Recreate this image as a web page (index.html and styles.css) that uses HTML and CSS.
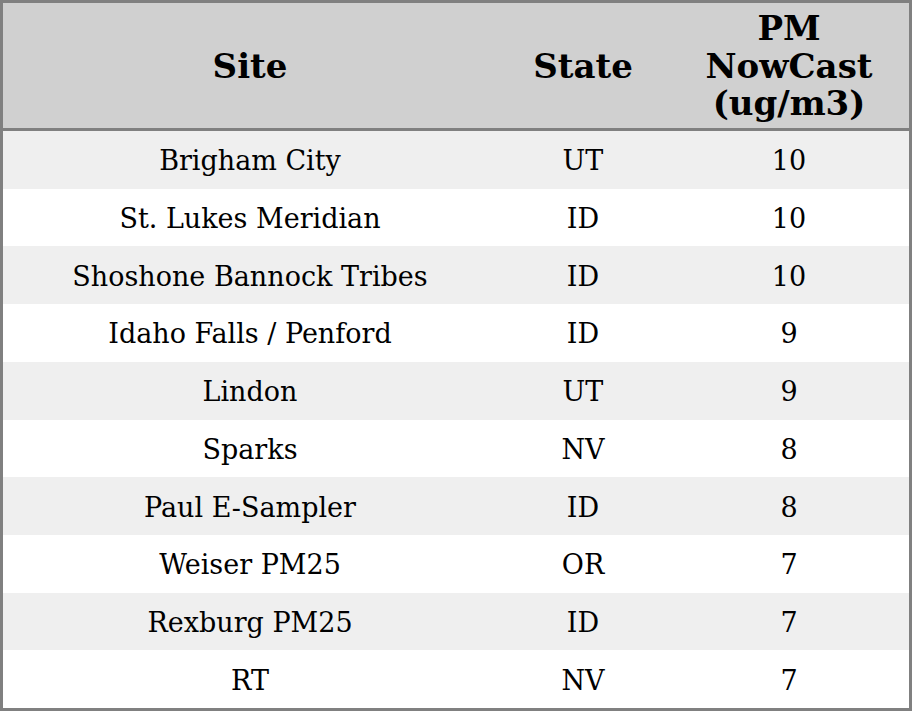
FILE: index.html
```html
<!DOCTYPE html>
<html>
<head>
<meta charset="utf-8">
<link rel="stylesheet" href="styles.css">
</head>
<body>
<div class="table">
  <div class="cell head">Site</div>
  <div class="cell head">State</div>
  <div class="cell head">PM<br>NowCast<br>(ug/m3)</div>

  <div class="cell odd">Brigham City</div><div class="cell odd">UT</div><div class="cell odd">10</div>
  <div class="cell">St. Lukes Meridian</div><div class="cell">ID</div><div class="cell">10</div>
  <div class="cell odd">Shoshone Bannock Tribes</div><div class="cell odd">ID</div><div class="cell odd">10</div>
  <div class="cell">Idaho Falls / Penford</div><div class="cell">ID</div><div class="cell">9</div>
  <div class="cell odd">Lindon</div><div class="cell odd">UT</div><div class="cell odd">9</div>
  <div class="cell">Sparks</div><div class="cell">NV</div><div class="cell">8</div>
  <div class="cell odd">Paul E-Sampler</div><div class="cell odd">ID</div><div class="cell odd">8</div>
  <div class="cell">Weiser PM25</div><div class="cell">OR</div><div class="cell">7</div>
  <div class="cell odd">Rexburg PM25</div><div class="cell odd">ID</div><div class="cell odd">7</div>
  <div class="cell">RT</div><div class="cell">NV</div><div class="cell">7</div>
</div>
</body>
</html>
```

FILE: styles.css
```css
html, body {
  margin: 0;
  padding: 0;
  background: #ffffff;
}
.table {
  box-sizing: border-box;
  width: 912px;
  height: 711px;
  border: 3px solid #808080;
  display: grid;
  grid-template-columns: 494px 172px 240px;
  grid-template-rows: 128px repeat(10, 1fr);
  font-family: "DejaVu Serif", serif;
  font-size: 27px;
  color: #000;
}
.cell {
  display: flex;
  align-items: center;
  justify-content: center;
  text-align: center;
  padding-top: 2px;
  background: #ffffff;
}
.cell.odd {
  background: #efefef;
}
.cell.head {
  background: #d0d0d0;
  border-bottom: 3px solid #808080;
  font-weight: bold;
  font-size: 34px;
  line-height: 37.5px;
}
```
